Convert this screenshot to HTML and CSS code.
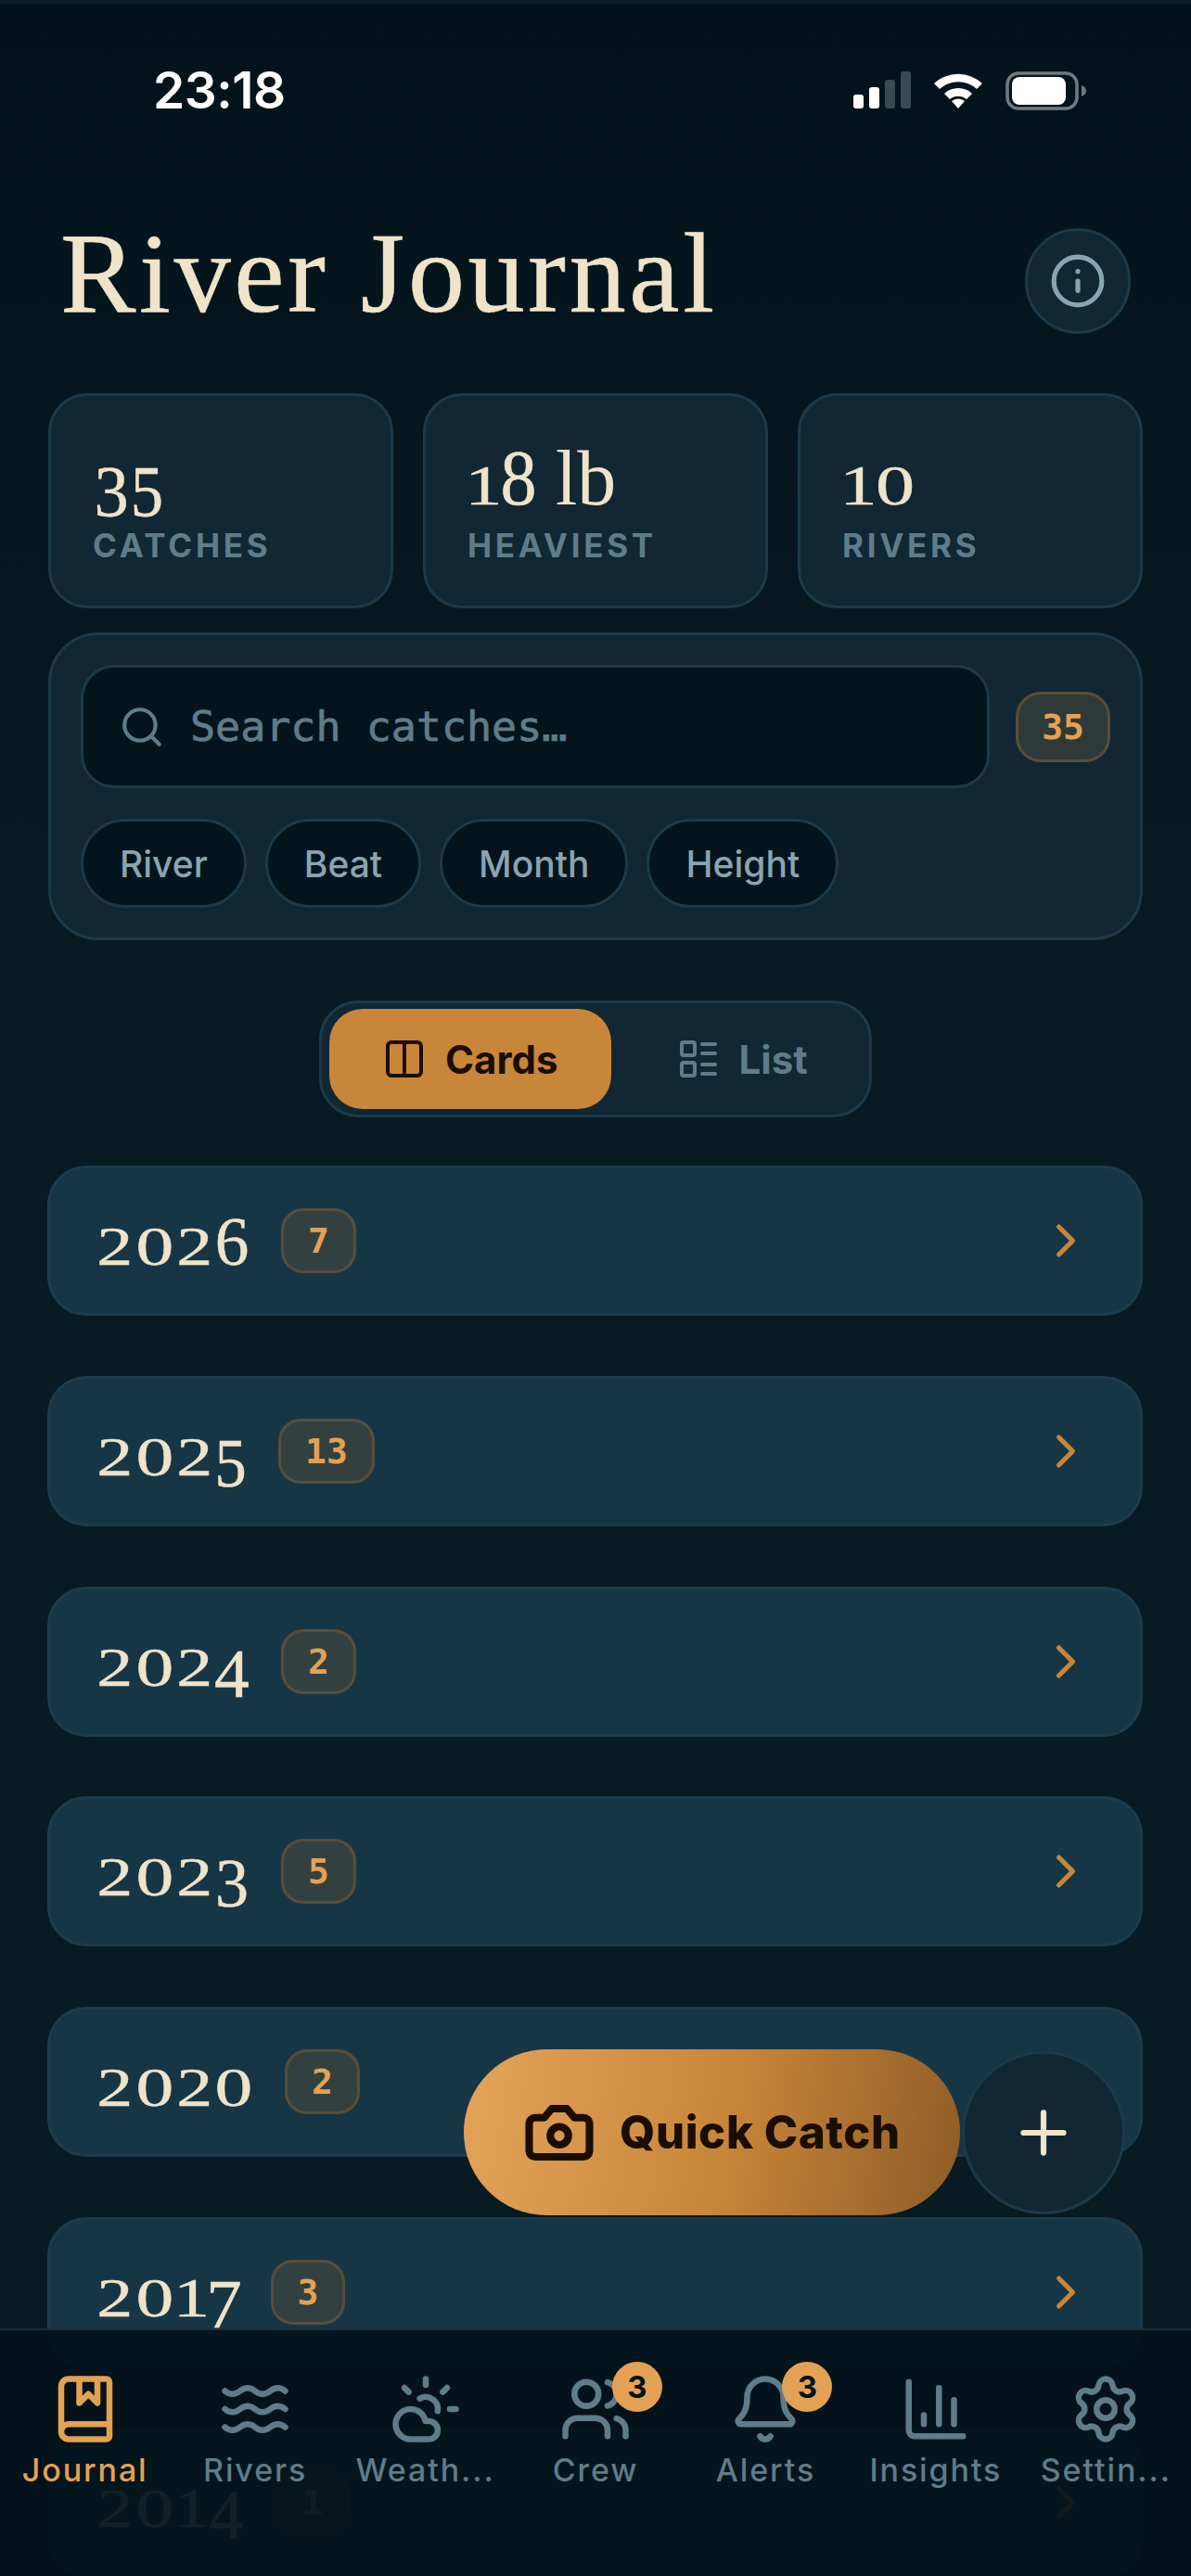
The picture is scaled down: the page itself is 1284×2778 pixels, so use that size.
FILE: index.html
```html
<!DOCTYPE html>
<html lang="en">
<head>
    <meta charset="UTF-8">
    <meta name="viewport" content="width=device-width, initial-scale=1.0">
    <title>River Journal</title>
    <link rel="stylesheet" href="styles.css">
</head>
<body>

<div class="screen">
    <div class="status-bar">
        <span class="clock">23:18</span>
        <div class="status-icons">
            <svg width="62" height="40" viewBox="0 0 62 40">
                <rect x="0" y="25" width="11" height="15" rx="3" fill="#fff"/>
                <rect x="17" y="17" width="11" height="23" rx="3" fill="#fff"/>
                <rect x="34" y="9" width="11" height="31" rx="3" fill="#3a4a52"/>
                <rect x="51" y="0" width="11" height="40" rx="3" fill="#3a4a52"/>
            </svg>
            <svg width="54" height="40" viewBox="0 0 54 40">
                <path d="M1 13a38 38 0 0 1 52 0l-6 6a30 30 0 0 0-40 0z" fill="#fff"/>
                <path d="M12 24a22 22 0 0 1 30 0l-6 6a14 14 0 0 0-18 0z" fill="#fff"/>
                <path d="M20 32a11 11 0 0 1 14 0l-7 8z" fill="#fff"/>
            </svg>
            <svg width="87" height="42" viewBox="0 0 87 42">
                <rect x="2" y="2" width="75" height="38" rx="12" fill="none" stroke="#6f7a80" stroke-width="3.5"/>
                <rect x="7" y="6" width="58" height="30" rx="8" fill="#fff"/>
                <path d="M82 15c3 1 5 3 5 6s-2 5-5 6z" fill="#6f7a80"/>
            </svg>
        </div>
    </div>

    <header class="header">
        <h1 class="title">River Journal</h1>
        <button class="info-btn">
            <svg class="icon" width="62" height="62" viewBox="0 0 24 24"><circle cx="12" cy="12" r="10"/><path d="M12 16v-4"/><path d="M12 8h.01"/></svg>
        </button>
    </header>

    <div class="stats">
        <div class="stat">
            <div class="stat-num"><span class="dg d3">3</span><span class="dg d5">5</span></div>
            <div class="stat-label">CATCHES</div>
        </div>
        <div class="stat">
            <div class="stat-num"><span class="dg d1">1</span><span class="dg d8">8</span><span class="stat-unit">lb</span></div>
            <div class="stat-label">HEAVIEST</div>
        </div>
        <div class="stat">
            <div class="stat-num"><span class="dg d1">1</span><span class="dg d0">0</span></div>
            <div class="stat-label">RIVERS</div>
        </div>
    </div>

    <div class="search-panel">
        <div class="search-row">
            <div class="search-input">
                <svg class="icon" width="50" height="50" viewBox="0 0 24 24"><circle cx="11" cy="11" r="8"/><path d="m21 21-4.3-4.3"/></svg>
                <span>Search catches…</span>
            </div>
            <span class="count count-lg">35</span>
        </div>
        <div class="chips">
            <span class="chip">River</span>
            <span class="chip">Beat</span>
            <span class="chip">Month</span>
            <span class="chip">Height</span>
        </div>
    </div>

    <div class="toggle-wrap">
        <div class="toggle">
            <div class="toggle-item active">
                <svg class="icon" width="48" height="48" viewBox="0 0 24 24"><rect x="3" y="3" width="18" height="18" rx="2"/><path d="M12 3v18"/></svg>
                <span>Cards</span>
            </div>
            <div class="toggle-item">
                <svg class="icon" width="48" height="48" viewBox="0 0 24 24"><rect x="3" y="3" width="7" height="7" rx="1"/><rect x="3" y="14" width="7" height="7" rx="1"/><path d="M14 4h7"/><path d="M14 9h7"/><path d="M14 15h7"/><path d="M14 20h7"/></svg>
                <span>List</span>
            </div>
        </div>
    </div>

    <div class="years">
        <div class="year-row">
            <div class="year"><span class="dg d2">2</span><span class="dg d0">0</span><span class="dg d2">2</span><span class="dg d6">6</span></div>
            <span class="count">7</span>
            <svg class="icon chevron" width="60" height="60" viewBox="0 0 24 24"><path d="m9 18 6-6-6-6"/></svg>
        </div>
        <div class="year-row">
            <div class="year"><span class="dg d2">2</span><span class="dg d0">0</span><span class="dg d2">2</span><span class="dg d5">5</span></div>
            <span class="count">13</span>
            <svg class="icon chevron" width="60" height="60" viewBox="0 0 24 24"><path d="m9 18 6-6-6-6"/></svg>
        </div>
        <div class="year-row">
            <div class="year"><span class="dg d2">2</span><span class="dg d0">0</span><span class="dg d2">2</span><span class="dg d4">4</span></div>
            <span class="count">2</span>
            <svg class="icon chevron" width="60" height="60" viewBox="0 0 24 24"><path d="m9 18 6-6-6-6"/></svg>
        </div>
        <div class="year-row">
            <div class="year"><span class="dg d2">2</span><span class="dg d0">0</span><span class="dg d2">2</span><span class="dg d3">3</span></div>
            <span class="count">5</span>
            <svg class="icon chevron" width="60" height="60" viewBox="0 0 24 24"><path d="m9 18 6-6-6-6"/></svg>
        </div>
        <div class="year-row">
            <div class="year"><span class="dg d2">2</span><span class="dg d0">0</span><span class="dg d2">2</span><span class="dg d0">0</span></div>
            <span class="count">2</span>
            <svg class="icon chevron" width="60" height="60" viewBox="0 0 24 24"><path d="m9 18 6-6-6-6"/></svg>
        </div>
        <div class="year-row">
            <div class="year"><span class="dg d2">2</span><span class="dg d0">0</span><span class="dg d1">1</span><span class="dg d7">7</span></div>
            <span class="count">3</span>
            <svg class="icon chevron" width="60" height="60" viewBox="0 0 24 24"><path d="m9 18 6-6-6-6"/></svg>
        </div>
        <div class="year-row">
            <div class="year"><span class="dg d2">2</span><span class="dg d0">0</span><span class="dg d1">1</span><span class="dg d4">4</span></div>
            <span class="count">1</span>
            <svg class="icon chevron" width="60" height="60" viewBox="0 0 24 24"><path d="m9 18 6-6-6-6"/></svg>
        </div>
    </div>

    <!-- floating actions sit over the list -->
    <div class="fab-group">
        <button class="quick-catch">
            <svg class="icon" width="78" height="78" viewBox="0 0 24 24"><path d="M14.5 4h-5L7 7H4a2 2 0 0 0-2 2v9a2 2 0 0 0 2 2h16a2 2 0 0 0 2-2V9a2 2 0 0 0-2-2h-3l-2.5-3z"/><circle cx="12" cy="13" r="3"/></svg>
            <span>Quick Catch</span>
        </button>
        <button class="add-btn">
            <svg class="icon" width="74" height="74" viewBox="0 0 24 24"><path d="M5 12h14"/><path d="M12 5v14"/></svg>
        </button>
    </div>

    <nav class="tabbar">
        <div class="tab active">
            <svg class="icon" width="78" height="78" viewBox="0 0 24 24"><path d="M10 2v8l3-3 3 3V2"/><path d="M4 19.5v-15A2.5 2.5 0 0 1 6.5 2H19a1 1 0 0 1 1 1v18a1 1 0 0 1-1 1H6.5a1 1 0 0 1 0-5H20"/></svg>
            <span>Journal</span>
        </div>
        <div class="tab">
            <svg class="icon" width="78" height="78" viewBox="0 0 24 24"><path d="M2 6c.6.5 1.2 1 2.5 1C7 7 7 5 9.5 5c2.6 0 2.4 2 5 2 2.5 0 2.5-2 5-2 1.3 0 1.9.5 2.5 1"/><path d="M2 12c.6.5 1.2 1 2.5 1 2.5 0 2.5-2 5-2 2.6 0 2.4 2 5 2 2.5 0 2.5-2 5-2 1.3 0 1.9.5 2.5 1"/><path d="M2 18c.6.5 1.2 1 2.5 1 2.5 0 2.5-2 5-2 2.6 0 2.4 2 5 2 2.5 0 2.5-2 5-2 1.3 0 1.9.5 2.5 1"/></svg>
            <span>Rivers</span>
        </div>
        <div class="tab">
            <svg class="icon" width="78" height="78" viewBox="0 0 24 24"><path d="M12 2v2"/><path d="m4.93 4.93 1.41 1.41"/><path d="M20 12h2"/><path d="m19.07 4.93-1.41 1.41"/><path d="M15.947 12.65a4 4 0 0 0-5.925-4.128"/><path d="M13 22H7a5 5 0 1 1 4.9-6H13a3 3 0 0 1 0 6Z"/></svg>
            <span>Weath...</span>
        </div>
        <div class="tab">
            <svg class="icon" width="78" height="78" viewBox="0 0 24 24"><path d="M16 21v-2a4 4 0 0 0-4-4H6a4 4 0 0 0-4 4v2"/><circle cx="9" cy="7" r="4"/><path d="M22 21v-2a4 4 0 0 0-3-3.87"/><path d="M16 3.13a4 4 0 0 1 0 7.75"/></svg>
            <span>Crew</span>
            <b class="tab-badge">3</b>
        </div>
        <div class="tab">
            <svg class="icon" width="78" height="78" viewBox="0 0 24 24"><path d="M10.268 21a2 2 0 0 0 3.464 0"/><path d="M3.262 15.326A1 1 0 0 0 4 17h16a1 1 0 0 0 .74-1.673C19.41 13.956 18 12.499 18 8A6 6 0 0 0 6 8c0 4.499-1.411 5.956-2.738 7.326"/></svg>
            <span>Alerts</span>
            <b class="tab-badge">3</b>
        </div>
        <div class="tab">
            <svg class="icon" width="78" height="78" viewBox="0 0 24 24"><path d="M3 3v16a2 2 0 0 0 2 2h16"/><path d="M18 17V9"/><path d="M13 17V5"/><path d="M8 17v-3"/></svg>
            <span>Insights</span>
        </div>
        <div class="tab">
            <svg class="icon" width="78" height="78" viewBox="0 0 24 24"><path d="M9.671 4.136a2.34 2.34 0 0 1 4.659 0 2.34 2.34 0 0 0 3.319 1.915 2.34 2.34 0 0 1 2.33 4.033 2.34 2.34 0 0 0 0 3.831 2.34 2.34 0 0 1-2.33 4.033 2.34 2.34 0 0 0-3.319 1.915 2.34 2.34 0 0 1-4.659 0 2.34 2.34 0 0 0-3.32-1.915 2.34 2.34 0 0 1-2.33-4.033 2.34 2.34 0 0 0 0-3.831A2.34 2.34 0 0 1 6.35 6.051a2.34 2.34 0 0 0 3.319-1.915"/><circle cx="12" cy="12" r="3"/></svg>
            <span>Settin...</span>
        </div>
    </nav>
</div>

</body>
</html>
```

FILE: styles.css
```css
* {
    box-sizing: border-box;
}
body {
    margin: 0;
    font-family: Inter, "Noto Sans", sans-serif;
    background-color: #04131b;
}
button {
    font-family: inherit;
    border: none;
    padding: 0;
}
.icon {
    fill: none;
    stroke: currentColor;
    stroke-width: 2;
    stroke-linecap: round;
    stroke-linejoin: round;
    flex-shrink: 0;
}
.screen {
    position: relative;
    width: 1284px;
    height: 2778px;
    overflow: hidden;
    border-top: 4px solid #0b1e28;
    background: linear-gradient(180deg, #04131b 0, #081a22 1100px, #081a22 100%);
}

/* status bar */
.status-bar {
    height: 242px;
    padding: 70px 113px 0 165px;
    display: flex;
    justify-content: space-between;
    align-items: flex-start;
}
.clock {
    color: #fff;
    font-size: 55px;
    line-height: 46px;
    font-weight: 600;
    letter-spacing: -0.5px;
}
.status-icons {
    display: flex;
    align-items: flex-start;
    gap: 24px;
    margin-top: 3px;
}

/* header */
.header {
    display: flex;
    justify-content: space-between;
    align-items: center;
    height: 114px;
    padding: 0 65px;
}
.title {
    margin: 0 0 16px;
    font-family: "Liberation Serif", serif;
    font-weight: 400;
    font-size: 122px;
    line-height: 114px;
    letter-spacing: 3.7px;
    color: #efe3c9;
    -webkit-text-stroke: 0.6px #efe3c9;
}
.info-btn {
    width: 114px;
    height: 114px;
    border-radius: 50%;
    background-color: #112733;
    border: 3px solid #1c3a4a;
    color: #8aa5b2;
    display: flex;
    align-items: center;
    justify-content: center;
}

/* old-style figures, built from lining digits */
.dg {
    display: inline-block;
    text-align: center;
    transform-origin: 50% 84%;
    -webkit-text-stroke: 0.4px #efe3c9;
}
.d0 { width: 44px; transform: scaleX(1.36); }
.d1 { width: 35px; transform: scaleX(1.3); }
.d2 { width: 41.5px; transform: scaleX(1.3); }
.d3 { width: 40px; transform: translateY(0.2em) scale(1.2, 1.25); }
.d4 { width: 40px; transform: translateY(0.2em) scale(1.26, 1.25); }
.d5 { width: 37px; transform: translateY(0.2em) scale(1.14, 1.25); }
.d6 { width: 40px; transform: scale(1.22, 1.25); }
.d7 { width: 35px; transform: translateY(0.2em) scale(1.28, 1.25); }
.d8 { width: 40px; transform: scale(1.26, 1.36); }

/* stats */
.stats {
    display: grid;
    grid-template-columns: repeat(3, 372px);
    justify-content: space-between;
    margin: 64px 52px 0;
}
.stat {
    height: 232px;
    padding: 65px 45px 0;
    background-color: #112733;
    border: 3px solid #1c3a4a;
    border-radius: 42px;
}
.stat-num {
    height: 62px;
    font-family: "Liberation Serif", serif;
    font-size: 62px;
    line-height: 1;
    color: #efe3c9;
    white-space: nowrap;
}
.stat-unit {
    font-size: 84px;
    line-height: 0;
    margin-left: 20px;
}
.stat-label {
    margin-top: 13px;
    font-size: 35px;
    line-height: 42px;
    font-weight: 700;
    letter-spacing: 3.7px;
    color: #5f7c8a;
}

/* search */
.search-panel {
    margin: 26px 52px 0;
    height: 332px;
    padding: 32px 32px;
    background-color: #112733;
    border: 3px solid #1c3a4a;
    border-radius: 54px;
}
.search-row {
    display: flex;
    align-items: center;
    gap: 28px;
}
.search-input {
    flex: 1;
    height: 133px;
    display: flex;
    align-items: center;
    gap: 27px;
    padding-left: 38px;
    background-color: #04141c;
    border: 3px solid #1c3a4a;
    border-radius: 36px;
    font-family: "DejaVu Sans Mono", "Liberation Mono", monospace;
    font-size: 45px;
    color: #5f7c8a;
    -webkit-text-stroke: 0.7px #5f7c8a;
}
.count {
    display: inline-block;
    height: 70px;
    padding: 0 26px;
    line-height: 64px;
    border: 3px solid #574e3a;
    border-radius: 24px;
    background-color: #32413f;
    font-family: "DejaVu Sans Mono", monospace;
    font-size: 38px;
    font-weight: 700;
    color: #e3a253;
}
.count-lg {
    height: 76px;
    line-height: 70px;
    padding: 0 25px;
    border-radius: 27px;
    background-color: #2f3a38;
}
.chips {
    display: flex;
    gap: 20px;
    margin-top: 33px;
}
.chip {
    height: 96px;
    padding: 0 39px;
    line-height: 92px;
    background-color: #04141c;
    border: 3px solid #1c3a4a;
    border-radius: 48px;
    font-size: 39px;
    font-weight: 500;
    color: #8aa5b2;
}

/* cards / list switch */
.toggle-wrap {
    display: flex;
    justify-content: center;
    margin-top: 65px;
}
.toggle {
    display: flex;
    gap: 13px;
    width: 596px;
    height: 126px;
    padding: 6px 6px 6px 8px;
    background-color: #112733;
    border: 3px solid #1c3a4a;
    border-radius: 42px;
}
.toggle-item {
    display: flex;
    align-items: center;
    gap: 20px;
    height: 108px;
    padding: 0 57px 0 57px;
    border-radius: 36px;
    font-size: 42px;
    font-weight: 700;
    color: #5f7c8a;
}
.toggle-item.active {
    background-color: #c8863a;
    color: #1a0e02;
}

/* year rows */
.years {
    display: flex;
    flex-direction: column;
    gap: 64.8px;
    margin: 52px 52px 0 51px;
}
.year-row {
    flex-shrink: 0;
    display: flex;
    align-items: center;
    height: 162px;
    padding: 0 50px 0 49px;
    background-color: #173645;
    border: 3px solid #1c3c4d;
    border-radius: 42px;
}
.year {
    height: 60px;
    margin: 12px 33px 0 0;
    font-family: "Liberation Serif", serif;
    font-size: 60px;
    line-height: 1;
    color: #efe3c9;
    white-space: nowrap;
}
.chevron {
    margin-left: auto;
    color: #c8863a;
}

/* floating buttons */
.fab-group {
    position: absolute;
    left: 500px;
    top: 2206px;
    display: flex;
    align-items: center;
    gap: 2px;
}
.quick-catch {
    display: flex;
    align-items: center;
    gap: 26px;
    width: 535px;
    height: 179px;
    padding-left: 64px;
    border-radius: 90px;
    background: linear-gradient(100deg, #e3a45a 0%, #c8863a 52%, #8f5c26 100%);
    color: #1a0e02;
    font-size: 49px;
    font-weight: 800;
    letter-spacing: 0.6px;
}
.quick-catch .icon {
    stroke-width: 2.5;
}
.add-btn {
    width: 176px;
    height: 176px;
    display: flex;
    align-items: center;
    justify-content: center;
    border-radius: 50%;
    background-color: #112733;
    border: 3px solid #1c3a4a;
    color: #efe3c9;
}

/* tab bar */
.tabbar {
    position: absolute;
    left: 0;
    right: 0;
    bottom: 0;
    height: 267px;
    display: grid;
    grid-template-columns: repeat(7, 1fr);
    padding-top: 46px;
    background-color: rgba(4, 19, 27, 0.94);
    border-top: 2px solid #173040;
}
.tab {
    position: relative;
    display: flex;
    flex-direction: column;
    align-items: center;
    font-size: 34px;
    line-height: 42px;
    font-weight: 500;
    letter-spacing: 1.9px;
    color: #5f7c8a;
    white-space: nowrap;
}
.tab span {
    margin-top: 6px;
}
.tab.active {
    color: #e3a253;
}
.tab-badge {
    position: absolute;
    left: calc(50% + 18px);
    top: -12px;
    width: 54px;
    height: 54px;
    border-radius: 50%;
    background-color: #e3a253;
    color: #04131b;
    font-size: 33px;
    line-height: 54px;
    font-weight: 700;
    letter-spacing: 0;
    text-align: center;
}
```
